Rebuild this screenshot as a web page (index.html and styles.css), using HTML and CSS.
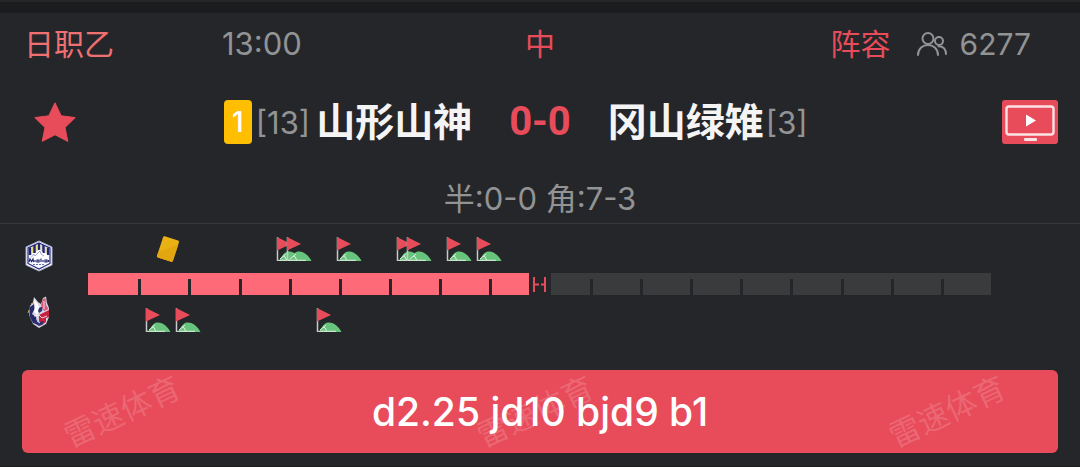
FILE: index.html
```html
<!DOCTYPE html>
<html lang="zh-CN">

<head>
    <meta charset="UTF-8">
    <meta name="viewport" content="width=device-width, initial-scale=1.0">
    <title>山形山神 0-0 冈山绿雉</title>
    <link rel="stylesheet" href="styles.css">
</head>

<body>
    <!-- Shared event icons -->
    <svg class="icon-defs" aria-hidden="true">
        <symbol id="corner" viewBox="0 0 26 26">
            <path d="M3 25 C6 20 8 16 12 15.500 C18 15 23 20 25.500 25 Z" fill="#68c47c" />
            <path d="M2 24.300 H20 M4 23 L10 18 M7 20 Q10 20 10.500 24" fill="none" stroke="#dfeee2" stroke-width="1" />
            <path d="M1.500 1 V25" stroke="#c9c9cb" stroke-width="1.500" />
            <path d="M1 1 L15 8 L1 14.500 Z" fill="#e84c5a" />
        </symbol>
        <symbol id="yellow" viewBox="0 0 26 28">
            <g transform="rotate(18 13 14)">
                <rect x="4" y="2" width="18" height="24" rx="1.500" fill="#e9b114" />
                <path d="M4 20 L22 6 V24.500 Q22 26 20.500 26 H5.500 Q4 26 4 24.500 Z" fill="#e2a60f" />
            </g>
        </symbol>
    </svg>

    <main class="match">
        <div class="meta">
            <div class="meta-left">
                <span class="league">日职乙</span>
                <span class="time">13:00</span>
            </div>
            <span class="status">中</span>
            <div class="meta-right">
                <a class="lineup" href="#">阵容</a>
                <svg class="people" viewBox="0 0 30 26" aria-hidden="true">
                    <g fill="none" stroke="#929395" stroke-width="2" stroke-linecap="round">
                        <circle cx="11" cy="7.500" r="5.500" />
                        <path d="M1 24 C1 10.500 21 10.500 21 24" />
                        <circle cx="22" cy="10" r="4" />
                        <path d="M21.500 15.200 C26.500 15 29 18.500 29 23" />
                    </g>
                </svg>
                <span>6277</span>
            </div>
        </div>

        <div class="teams">
            <div class="side">
                <button class="icon-button star" type="button" aria-label="收藏">
                    <svg viewBox="0 0 42 40" aria-hidden="true">
                        <path d="M21 0.800 L27.200 13.800 L41.200 15.600 L31 25.500 L33.800 39.400 L21 32.800 L8.200 39.400 L11 25.500 L0.800 15.600 L14.800 13.800 Z"
                            fill="#e84c5a" stroke="#e84c5a" stroke-linejoin="round" />
                    </svg>
                </button>
                <div class="team">
                    <span class="card-count">1</span>
                    <span class="rank">[13]</span>
                    <span class="name name-home">山形山神</span>
                </div>
            </div>
            <strong class="score">0-0</strong>
            <div class="side">
                <div class="team">
                    <span class="name name-away">冈山绿雉</span>
                    <span class="rank">[3]</span>
                </div>
                <button class="icon-button tv" type="button" aria-label="直播">
                    <svg viewBox="0 0 56 44" aria-hidden="true">
                        <rect width="56" height="44" rx="3" fill="#e84c5a" />
                        <rect x="4.500" y="6.500" width="47" height="28" rx="2.500" fill="none" stroke="#fbe3e5" stroke-width="2.400" />
                        <path d="M24 14.500 L34 20.500 L24 26.500 Z" fill="#fff" />
                        <rect x="22" y="38" width="13" height="3" rx="1" fill="#fbe3e5" />
                    </svg>
                </button>
            </div>
        </div>

        <div class="detail">半:0-0 角:7-3</div>

        <div class="timeline">
            <div class="logos">
                <svg class="logo" viewBox="0 0 28 32" role="img" aria-label="山形山神">
                    <path d="M14 1 L27 7 V25 L14 31 L1 25 V7 Z" fill="#fff" stroke="#a9abd0" />
                    <path d="M14 3 L25 8 V23.500 L14 29 L3 23.500 V8 Z" fill="#f6f7ff" stroke="#242a78" stroke-width="1.200" />
                    <path d="M5 7.500 V15 M9.500 5 V13 M14 3 V10 M18.500 5 V13 M23 7.500 V15" stroke="#20276f" stroke-width="2.500" />
                    <path d="M7.300 7 V13 M11.800 5 V11 M16.300 5 V11 M20.800 7 V13" stroke="#e5d96b" stroke-width="1.200" />
                    <path d="M4 20 L9 13 L11 14 L15 9.500 L19 14 L21 13 L24 18 V21 H4 Z" fill="#fff" />
                    <path d="M6 17.500 L9 14 L10 16 L15 11 L16 14 L19 16" fill="none" stroke="#7f86b8" stroke-width="0.700" />
                    <path d="M4 22 L5 19 L6.500 21.500 L8 19 L8.500 22 M10 20 V22 M12 20 H14 V22 H12 Z M16 18.500 V22 M18 20 V22 M20 20 H22 V22 H20 Z M23.500 20 V22"
                        fill="none" stroke="#20276f" stroke-width="1.200" />
                    <path d="M8 24.500 H20" stroke="#6970aa" stroke-width="1.200" stroke-dasharray="2 1" />
                </svg>
                <svg class="logo" viewBox="0 0 28 32" role="img" aria-label="冈山绿雉">
                    <path d="M5 10 L8 6 L9 1 L13 6 L16 8 L18 2 L21 0.500 L22 7 L24 12 V21 L21 28 L14 32 L8 28 L4 19 Z" fill="#d8d3e0" />
                    <path d="M5 11 L9 8 L9.500 13 L7 18 L11 21 L12 28 L8 27 L4.500 20 Z" fill="#252a6b" />
                    <path d="M9 3 L13 8 L15 14 L12 19 L9 16 L10 11 Z" fill="#fff" />
                    <path d="M14 12 L18 10 L17 15 L14 17 L13 15 Z" fill="#303673" />
                    <path d="M16 9 L18 3 L20.500 2 L21 9 L23.500 13 L19 15 Z" fill="#d9577b" />
                    <path d="M14 19 L24 14 V21 L21 22 L21 26 L17 29 L14 25 Z" fill="#c6213f" />
                    <path d="M10 23 L14 26 L19 25 L17 29 L14 30 L9 27 Z" fill="#2b3175" />
                    <path d="M9 20 L14 19 L17 22 L22 20 M12 25 L15 27 M19 5 V13" fill="none" stroke="#fff" stroke-width="0.800" />
                    <path d="M4 14 L3 17 M6 8 L9 7" stroke="#c9a56c" />
                </svg>
            </div>

            <div class="axis">
                <!-- Event position is minute / 90 -->
                <div class="events events-home">
                    <svg class="event" style="left: 8.89%"><use href="#yellow" /></svg>
                    <svg class="event" style="left: 22.22%"><use href="#corner" /></svg>
                    <svg class="event" style="left: 23.33%"><use href="#corner" /></svg>
                    <svg class="event" style="left: 28.89%"><use href="#corner" /></svg>
                    <svg class="event" style="left: 35.56%"><use href="#corner" /></svg>
                    <svg class="event" style="left: 36.67%"><use href="#corner" /></svg>
                    <svg class="event" style="left: 41.11%"><use href="#corner" /></svg>
                    <svg class="event" style="left: 44.44%"><use href="#corner" /></svg>
                </div>
                <div class="bar">
                    <div class="half half-first">
                        <i></i><i></i><i></i><i></i><i></i><i></i><i></i><i></i><i></i>
                    </div>
                    <svg class="half-mark" viewBox="0 0 22 22" role="img" aria-label="中场">
                        <path d="M5 4 V19 M16 4 V19" stroke="#e84c5a" stroke-width="2" />
                        <path d="M5 11.500 H10 M12 11.500 H16" stroke="#e84c5a" stroke-width="2" />
                    </svg>
                    <div class="half half-second">
                        <i></i><i></i><i></i><i></i><i></i><i></i><i></i><i></i><i></i>
                    </div>
                </div>
                <div class="events events-away">
                    <svg class="event" style="left: 7.78%"><use href="#corner" /></svg>
                    <svg class="event" style="left: 11.11%"><use href="#corner" /></svg>
                    <svg class="event" style="left: 26.67%"><use href="#corner" /></svg>
                </div>
            </div>
        </div>

        <button class="tip" type="button">
            <span class="watermarks" aria-hidden="true">
                <span>雷速体育</span>
                <span>雷速体育</span>
                <span>雷速体育</span>
            </span>
            d2.25 jd10 bjd9 b1
        </button>
    </main>
</body>

</html>
```
FILE: styles.css
```css
body {
    margin: 0;
    padding-top: 2px;
    background-color: #252629;
    color: #929395;
    font-family: Inter, "Noto Sans CJK SC", sans-serif;
    font-size: 30px;
}

button {
    border: none;
    padding: 0;
    font-family: inherit;
    cursor: pointer;
}

a {
    color: inherit;
    text-decoration: none;
}

svg {
    display: block;
}

.icon-defs {
    position: absolute;
    width: 0;
    height: 0;
}

.match {
    border-top: 11px solid #1b1c1e;
    border-bottom: 1px solid #1b1c1e;
    padding-bottom: 13px;
}

/* League, kick-off time and viewers */
.meta {
    display: grid;
    grid-template-columns: 1fr auto 1fr;
    align-items: center;
    height: 62px;
    padding: 0 24px;
    line-height: 40px;
}

.meta-left,
.meta-right {
    display: flex;
    align-items: center;
}

.meta-right {
    justify-content: flex-end;
    padding-right: 25px;
}

.league {
    width: 198px;
    color: #f06f70;
}

.time,
.rank,
.detail {
    font-size: 31px;
}

.status,
.lineup {
    color: #e84c5a;
}

.people {
    width: 30px;
    height: 26px;
    margin: 0 13px 0 26px;
}

/* Teams and score */
.teams {
    display: grid;
    grid-template-columns: 1fr auto 1fr;
    align-items: center;
    column-gap: 37px;
    height: 94px;
    padding: 0 22px;
}

.side,
.team {
    display: flex;
    align-items: center;
}

.side {
    justify-content: space-between;
}

.icon-button {
    background: none;
}

.star {
    padding-left: 12px;
}

.star svg {
    width: 42px;
    height: 40px;
}

.tv svg {
    width: 56px;
    height: 44px;
}

.card-count {
    width: 28px;
    margin-right: 4px;
    border-radius: 4px;
    background-color: #ffbf00;
    color: #fff;
    font-size: 28px;
    font-weight: 500;
    line-height: 44px;
    text-align: center;
}

.name {
    color: #f4f4f5;
    font-size: 39px;
    font-weight: 700;
    line-height: 50px;
}

.name-home {
    margin-left: 6px;
}

.name-away {
    margin-right: 2px;
}

.score {
    color: #e84c5a;
    font-family: Roboto, sans-serif;
    font-size: 40px;
    line-height: 50px;
}

.detail {
    padding-top: 6px;
    border-bottom: 1px solid #37383a;
    line-height: 48px;
    text-align: center;
}

/* Match timeline */
.timeline {
    display: flex;
    align-items: center;
    gap: 35px;
    padding: 0 89px 0 25px;
}

.logos {
    display: flex;
    flex-direction: column;
    gap: 24px;
}

.logo {
    width: 28px;
    height: 32px;
}

.axis {
    flex: 1;
}

.events {
    position: relative;
    height: 49px;
}

.event {
    position: absolute;
    top: 12px;
    width: 26px;
    height: 26px;
    transform: translateX(-50%);
}

.bar {
    display: flex;
    height: 22px;
}

.half {
    display: flex;
    flex: 1;
}

.half-first {
    background-color: #ff6a79;
}

.half-second {
    background-color: #3a3b3d;
}

.half i {
    display: flex;
    flex: 50;
    align-items: flex-end;
}

.half-first i:last-child,
.half-second i:first-child {
    flex: 39;
}

.half i:not(:first-child)::before {
    content: "";
    width: 3px;
    height: 16px;
    background-color: #252629;
}

.half-mark {
    width: 22px;
    height: 22px;
}

/* Tip button */
.tip {
    position: relative;
    display: block;
    width: calc(100% - 44px);
    margin: 26px 22px 0;
    border-radius: 6px;
    background-color: #e84c5a;
    color: #fff;
    font-size: 39px;
    font-weight: 500;
    line-height: 83px;
    overflow: hidden;
}

.watermarks {
    position: absolute;
    inset: 0;
    display: flex;
    align-items: center;
    justify-content: space-between;
    padding: 0 49px 0 38px;
    color: rgba(255, 255, 255, 0.16);
    font-size: 31px;
    font-weight: 400;
}

.watermarks span {
    transform: rotate(-25deg);
}
```
